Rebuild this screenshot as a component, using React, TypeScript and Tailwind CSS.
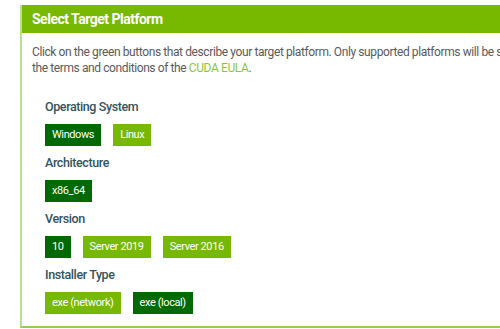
import React from 'react';

type Group = { label: string; options: { name: string; active: boolean }[] };

const groups: Group[] = [
  {
    label: 'Operating System',
    options: [
      { name: 'Windows', active: true },
      { name: 'Linux', active: false },
    ],
  },
  { label: 'Architecture', options: [{ name: 'x86_64', active: true }] },
  {
    label: 'Version',
    options: [
      { name: '10', active: true },
      { name: 'Server 2019', active: false },
      { name: 'Server 2016', active: false },
    ],
  },
  {
    label: 'Installer Type',
    options: [
      { name: 'exe (network)', active: false },
      { name: 'exe (local)', active: true },
    ],
  },
];

export default function App() {
  return (
    <div
      className="w-[500px] h-[329px] overflow-hidden bg-white pt-[5px] pl-5"
      style={{ fontFamily: 'Roboto, "Liberation Sans", sans-serif' }}
    >
      <div className="w-[720px] border-l-2 border-b-2 border-l-[#b9e08a] border-b-[#8fd14f]">
        <div className="h-[28px] bg-[#76b900] flex items-center pl-[10px] text-white text-[14px] tracking-[-0.5px] font-bold">
          Select Target Platform
        </div>
        <div className="pl-[10px] pt-[11px] pb-3">
          <p className="text-[12px] tracking-[-0.4px] leading-4 text-[#5a5a5c] whitespace-nowrap">
            Click on the green buttons that describe your target platform. Only supported platforms will be shown. By downloading and using the software, you agree to fully comply with
            <br />
            the terms and conditions of the <span className="text-[#8cc63f]">CUDA EULA</span>.
          </p>
          <div className="pl-[13px] pt-[22px] flex flex-col gap-2">
            {groups.map((g) => (
              <div key={g.label} className="flex flex-col gap-2">
                <div className="h-[18px] leading-[18px] text-[12.5px] tracking-[-0.4px] font-medium text-[#35535d]">
                  {g.label}
                </div>
                <div className="flex gap-3">
                  {g.options.map((o) => (
                    <button
                      key={o.name}
                      className={
                        'h-[22px] px-[7px] text-[11px] tracking-[-0.4px] text-white ' +
                        (o.active ? 'bg-[#006a00]' : 'bg-[#76b900]')
                      }
                    >
                      {o.name}
                    </button>
                  ))}
                </div>
              </div>
            ))}
          </div>
        </div>
      </div>
    </div>
  );
}
